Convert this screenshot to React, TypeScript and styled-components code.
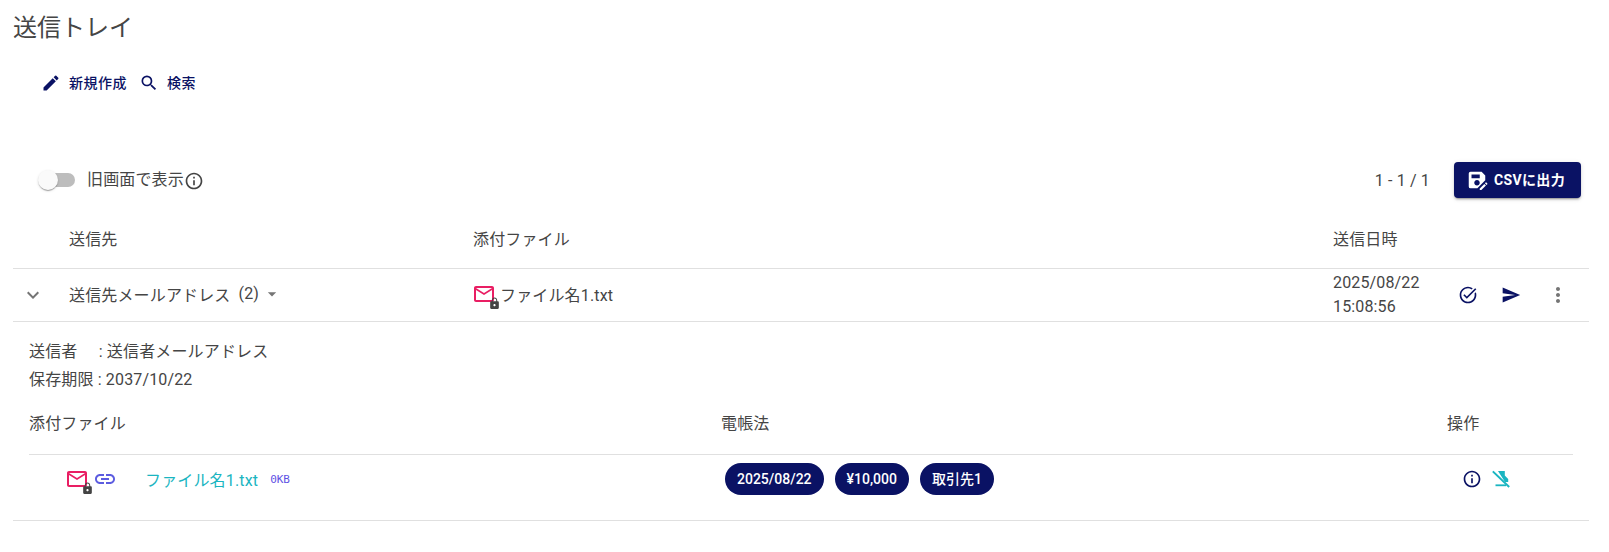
import React from 'react';
import styled, { createGlobalStyle } from 'styled-components';
import {
  MdEdit, MdSearch, MdInfoOutline, MdTaskAlt, MdSend, MdMoreVert, MdExpandMore,
  MdArrowDropDown, MdLink, MdMailOutline, MdLock, MdSaveAs,
} from 'react-icons/md';

const NAVY = '#0a1264';
const TEXT = '#454545';
const LINE = '#e0e0e0';

const Global = createGlobalStyle`
  html, body { margin: 0; padding: 0; background: #fff; }
  body {
    font-family: Roboto, "Noto Sans CJK JP", sans-serif;
    color: ${TEXT};
    font-size: 16px;
    letter-spacing: .15px;
  }
`;

const Page = styled.div`
  width: 1609px;
  height: 552px;
  box-sizing: border-box;
  padding: 12px 20px 0 13px;
  overflow: hidden;
`;

const Title = styled.h1`
  margin: 0;
  font-size: 24px;
  line-height: 32px;
  font-weight: 400;
  letter-spacing: 0;
`;

const Toolbar = styled.div`
  display: flex;
  align-items: center;
  height: 36px;
  margin-top: 21px;
  padding-left: 28px;
  gap: 12px;
`;

const ToolButton = styled.button`
  display: flex;
  align-items: center;
  gap: 8px;
  border: 0;
  padding: 0;
  background: none;
  color: ${NAVY};
  font: 500 14px/20px Roboto, "Noto Sans CJK JP", sans-serif;
  letter-spacing: .5px;
  svg { font-size: 20px; }
`;

const Controls = styled.div`
  display: flex;
  align-items: center;
  justify-content: space-between;
  height: 36px;
  margin-top: 61px;
  padding: 0 8px 0 25px;
`;

const SwitchGroup = styled.div`
  display: flex;
  align-items: center;
`;

const SwitchTrack = styled.span`
  position: relative;
  display: block;
  width: 34px;
  height: 14px;
  margin-left: 3px;
  border-radius: 7px;
  background: #bdbdbd;
`;

const SwitchThumb = styled.span`
  position: absolute;
  left: -3px;
  top: -3px;
  width: 20px;
  height: 20px;
  border-radius: 50%;
  background: #fafafa;
  box-shadow: 0 2px 1px -1px rgba(0,0,0,.2), 0 1px 1px rgba(0,0,0,.14), 0 1px 3px rgba(0,0,0,.12);
`;

const SwitchLabel = styled.span`
  margin-left: 12px;
  line-height: 24px;
`;

const InfoMark = styled(MdInfoOutline)`
  font-size: 20px;
  margin-top: 2px;
  color: #444;
`;

const Pager = styled.div`
  display: flex;
  align-items: center;
  gap: 24px;
`;

const PageCount = styled.span`
  font-size: 16px;
`;

const CsvButton = styled.button`
  display: flex;
  align-items: center;
  gap: 6px;
  width: 127px;
  height: 36px;
  box-sizing: border-box;
  padding: 0 0 0 12px;
  border: 0;
  border-radius: 4px;
  background: ${NAVY};
  color: #fff;
  font: 700 14px/20px Roboto, "Noto Sans CJK JP", sans-serif;
  letter-spacing: .35px;
  box-shadow: 0 3px 1px -2px rgba(0,0,0,.2), 0 2px 2px rgba(0,0,0,.14), 0 1px 5px rgba(0,0,0,.12);
  svg { font-size: 22px; }
`;

const MainGrid = styled.div`
  display: grid;
  grid-template-columns: 56px 404px 860px 124px 1fr;
  align-items: center;
`;

const MainHead = styled(MainGrid)`
  height: 59px;
  margin-top: 12px;
  padding-bottom: 2px;
  border-bottom: 1px solid ${LINE};
  box-sizing: border-box;
`;

const MainRow = styled(MainGrid)`
  height: 52px;
  border-bottom: 1px solid ${LINE};
`;

const Expand = styled(MdExpandMore)`
  font-size: 24px;
  margin-left: 8px;
  color: #757575;
`;

const Recipient = styled.div`
  display: flex;
  align-items: center;
  padding-bottom: 3px;
  svg { font-size: 20px; color: #757575; margin-left: 3px; }
`;

const Count = styled.span`
  margin-left: 8px;
`;

const FileCell = styled.div`
  display: flex;
  align-items: center;
  gap: 4px;
  margin-left: -1px;
  padding-bottom: 3px;
`;

const LockedMailBox = styled.span`
  position: relative;
  display: block;
  width: 24px;
  height: 24px;
  flex: none;
`;

const MailIcon = styled(MdMailOutline)`
  display: block;
  font-size: 24px;
  color: #e91e63;
`;

const LockBadge = styled(MdLock)`
  position: absolute;
  right: -5px;
  bottom: -4px;
  font-size: 13px;
  color: #444;
`;

const DateCell = styled.div`
  line-height: 24px;
`;

const RowActions = styled.div`
  display: flex;
  align-items: center;
`;

const ActionSlot = styled.span<{ $w: number; $color: string; $size: number }>`
  display: flex;
  justify-content: center;
  width: ${p => p.$w}px;
  color: ${p => p.$color};
  font-size: ${p => p.$size}px;
`;

const Detail = styled.div`
  padding: 16px 16px 17px;
  border-bottom: 1px solid ${LINE};
`;

const MetaLine = styled.div`
  line-height: 28px;
  white-space: pre;
`;

const MetaKey = styled.span`
  margin-right: 1px;
`;

const SubGrid = styled.div`
  display: grid;
  grid-template-columns: 692px 726px 1fr;
  align-items: center;
`;

const SubHead = styled(SubGrid)`
  height: 60px;
  padding-bottom: 2px;
  margin-top: -2px;
  border-bottom: 1px solid ${LINE};
`;

const SubRow = styled(SubGrid)`
  height: 48px;
`;

const SubFile = styled.div`
  display: flex;
  align-items: center;
  padding-left: 36px;
`;

const LinkIcon = styled(MdLink)`
  font-size: 24px;
  margin-left: 4px;
  color: #5c5ce0;
`;

const FileLink = styled.a`
  margin-left: 28px;
  color: #1ab5c1;
`;

const FileSize = styled.span`
  margin: 2px 0 0 12px;
  font: 11px/16px "DejaVu Sans Mono", monospace;
  letter-spacing: 0;
  color: #5f52e4;
`;

const Chips = styled.div`
  display: flex;
  gap: 11px;
  padding-left: 4px;
`;

const Chip = styled.span`
  display: block;
  padding: 0 12px;
  border-radius: 16px;
  height: 32px;
  line-height: 32px;
  font-size: 14px;
  font-weight: 500;
  letter-spacing: 0;
  color: #fff;
  background: ${NAVY};
`;

const OpIcons = styled.div`
  display: flex;
  align-items: center;
  gap: 9px;
  padding-left: 15px;
`;

const OpInfo = styled(MdInfoOutline)`
  font-size: 20px;
  color: ${NAVY};
`;

const StampOff = () => (
  <svg width="20" height="20" viewBox="0 0 20 20" fill="none">
    <path d="M7 2h6.8v4.6l3.4 3.4v3H14z" fill="#1ab5c1" />
    <rect x="4.5" y="15.4" width="10.5" height="1.8" fill="#1ab5c1" />
    <path d="M1.8 2.4 L18.2 18" stroke="#1ab5c1" strokeWidth="2" />
  </svg>
);

const LockedMail = () => (
  <LockedMailBox>
    <MailIcon />
    <LockBadge />
  </LockedMailBox>
);

export default function App() {
  return (
    <Page>
      <Global />
      <Title>送信トレイ</Title>
      <Toolbar>
        <ToolButton><MdEdit />新規作成</ToolButton>
        <ToolButton><MdSearch />検索</ToolButton>
      </Toolbar>
      <Controls>
        <SwitchGroup>
          <SwitchTrack><SwitchThumb /></SwitchTrack>
          <SwitchLabel>旧画面で表示</SwitchLabel>
          <InfoMark />
        </SwitchGroup>
        <Pager>
          <PageCount>1 - 1 / 1</PageCount>
          <CsvButton><MdSaveAs />CSVに出力</CsvButton>
        </Pager>
      </Controls>
      <MainHead>
        <span />
        <span>送信先</span>
        <span>添付ファイル</span>
        <span>送信日時</span>
        <span />
      </MainHead>
      <MainRow>
        <Expand />
        <Recipient>送信先メールアドレス<Count>(2)</Count><MdArrowDropDown /></Recipient>
        <FileCell><LockedMail />ファイル名1.txt</FileCell>
        <DateCell>2025/08/22<br />15:08:56</DateCell>
        <RowActions>
          <ActionSlot $w={22} $color={NAVY} $size={20}><MdTaskAlt /></ActionSlot>
          <ActionSlot $w={64} $color={NAVY} $size={20}><MdSend /></ActionSlot>
          <ActionSlot $w={30} $color="#757575" $size={24}><MdMoreVert /></ActionSlot>
        </RowActions>
      </MainRow>
      <Detail>
        <MetaLine><MetaKey>送信者　</MetaKey> : 送信者メールアドレス</MetaLine>
        <MetaLine>保存期限 : 2037/10/22</MetaLine>
        <SubHead>
          <span>添付ファイル</span>
          <span>電帳法</span>
          <span>操作</span>
        </SubHead>
        <SubRow>
          <SubFile>
            <LockedMail />
            <LinkIcon />
            <FileLink>ファイル名1.txt</FileLink>
            <FileSize>0KB</FileSize>
          </SubFile>
          <Chips>
            <Chip>2025/08/22</Chip>
            <Chip>¥10,000</Chip>
            <Chip>取引先1</Chip>
          </Chips>
          <OpIcons>
            <OpInfo />
            <StampOff />
          </OpIcons>
        </SubRow>
      </Detail>
    </Page>
  );
}
